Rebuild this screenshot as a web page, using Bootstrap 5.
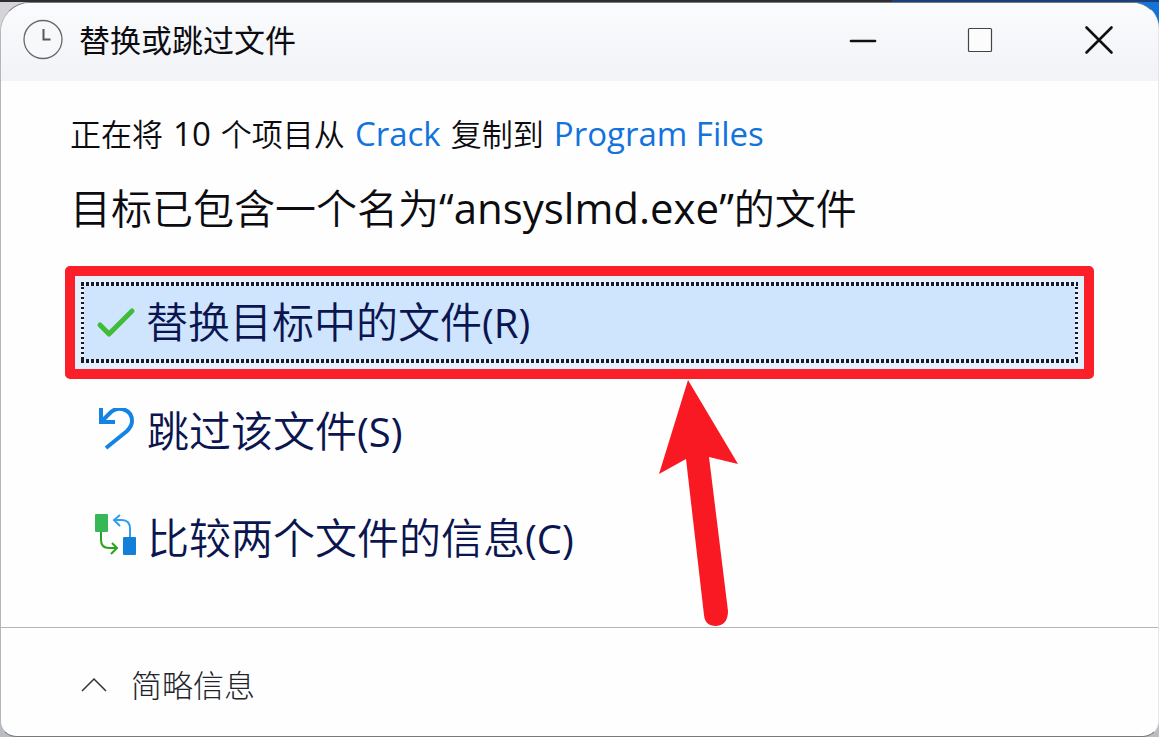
<!DOCTYPE html>
<html lang="zh-CN">
<head>
<meta charset="utf-8">
<meta name="viewport" content="width=device-width, initial-scale=1">
<title>替换或跳过文件</title>
<link href="https://cdn.jsdelivr.net/npm/bootstrap@5.3.0/dist/css/bootstrap.min.css" rel="stylesheet">
<style>
  body {
    font-family: "Open Sans", "Noto Sans CJK SC", sans-serif;
    color: #0c0c10;
    background: linear-gradient(90deg, #2f2d33 0 77%, #1b3f78 77%) top / 100% 2px no-repeat, linear-gradient(90deg, #d5d5d8 0 77%, #1473d8 77%) top / 100% 60px no-repeat, #b9bcc0;
  }
  .desktop { padding-top: 2px; }
  .dialog-window {
    border: 1px solid #b4b6b9;
    border-color: #77797d #e4e6e9 #77797d #b4b6b9;
    border-radius: 30px 26px 16px 16px;
    background: #fefefe;
  }
  .title-bar { height: 78px; background: linear-gradient(#fafbfd, #f1f3f6); padding: 0 0 4px 22px; }
  .title-text { font-size: 31px; line-height: 40px; font-weight: 400; }
  .caption-btn { width: 118px; height: 72px; border: 0; background: transparent; padding: 0; }
  .dialog-main { padding: 31px 64px 0; }
  .inset-text { padding-left: 5px; }
  .copy-line { font-size: 31px; line-height: 44px; font-weight: 350; }
  .copy-line a { color: #1273dc; }
  .latin { font-size: 33px; font-weight: 400; padding: 0 2px; }
  .headline { font-size: 41px; line-height: 56px; font-weight: 350; margin-top: 24px; }
  .headline-latin { font-size: 42px; font-weight: 400; }
  .key-hint { font-size: 40px; font-weight: 400; }
  .option-btn {
    border: 0; background: transparent; color: #0b1550; text-align: left;
    font-size: 42px; line-height: 60px; font-weight: 350; padding: 0 30px;
  }
  .option-btn svg { flex: none; width: 44px; height: 48px; }
  .option-area { margin-top: 30px; }
  .option-gap { gap: 46px; margin-top: 22px; }
  .marked { border: 10px solid #fb1f2a; border-radius: 5px; background: #e3effd; padding: 6px; }
  .marked .option-btn {
    width: 100%; height: 81px; padding: 0 13px;
    background:
      repeating-linear-gradient(90deg, #17192b 0 3px, #e9f1fb 3px 5px) top / 100% 4px no-repeat,
      repeating-linear-gradient(90deg, #17192b 0 3px, #e9f1fb 3px 5px) bottom / 100% 4px no-repeat,
      repeating-linear-gradient(#17192b 0 2px, #e9f1fb 2px 5px) left / 3px 100% no-repeat,
      repeating-linear-gradient(#17192b 0 2px, #e9f1fb 2px 5px) right / 3px 100% no-repeat,
      #cfe4fd;
  }
  .pointer-arrow { position: absolute; left: 58%; top: 100%; width: 82px; height: 257px; overflow: visible; pointer-events: none; }
  .dialog-foot { border-top: 1px solid #b4b5b8; height: 109px; padding: 6px 80px 0; }
  .fold-btn { border: 0; background: transparent; padding: 0; font-size: 31px; line-height: 44px; font-weight: 300; gap: 24px; color: #20242c; }
</style>
</head>
<body>
<div class="desktop min-vh-100 d-flex flex-column">
<div class="dialog-window flex-grow-1 d-flex flex-column overflow-hidden" role="dialog" aria-labelledby="dialogTitle">
  <header class="title-bar d-flex align-items-center">
    <svg width="40" height="42" viewBox="0 0 40 42" fill="none" aria-hidden="true"><circle cx="20" cy="20.500" r="19" fill="#f7f8f9" stroke="#65676b" stroke-width="1.300"/><path d="M20.500 10v10.500h7" stroke="#55575b" stroke-width="2"/></svg>
    <h1 id="dialogTitle" class="title-text mb-0 ms-3">替换或跳过文件</h1>
    <div class="ms-auto d-flex">
      <button type="button" class="caption-btn" aria-label="最小化"><svg width="30" height="30"><path d="M3 16h24" stroke="#111" stroke-width="2.600" stroke-linecap="round"/></svg></button>
      <button type="button" class="caption-btn" aria-label="最大化"><svg width="30" height="30"><rect x="2.500" y="3.500" width="23" height="23" rx="1" fill="#fcfcfd" stroke="#444" stroke-width="1.200"/></svg></button>
      <button type="button" class="caption-btn" aria-label="关闭"><svg width="30" height="30"><path d="M2.500 2.500 27.500 27.500M27.500 2.500 2.500 27.500" stroke="#111" stroke-width="2.600" stroke-linecap="round"/></svg></button>
    </div>
  </header>

  <main class="dialog-main flex-grow-1">
    <p class="copy-line inset-text mb-0">正在将 <span class="latin">10</span> 个项目从 <a href="#" class="latin text-decoration-none">Crack</a> 复制到 <a href="#" class="latin text-decoration-none">Program Files</a></p>
    <h2 class="headline inset-text mb-0">目标已包含一个名为<span class="headline-latin">“ansyslmd.exe”</span>的文件</h2>

    <div class="option-area">
      <div class="marked position-relative">
        <button type="button" class="option-btn d-flex align-items-center gap-2">
          <svg viewBox="0 0 44 48" fill="none" aria-hidden="true"><path d="M6 26 15 35 38 12" stroke="#3fbd38" stroke-width="5" stroke-linecap="round" stroke-linejoin="round"/></svg>
          <span>替换目标中的文件<span class="key-hint">(R)</span></span>
        </button>
        <svg class="pointer-arrow" viewBox="3 -9 82 257" aria-hidden="true"><path d="M31 2 81 86 52 79 71 233Q71 247 59 248 48 248 47 237L29 81 2 96Z" fill="#f91922"/></svg>
      </div>
      <div class="option-gap d-flex flex-column align-items-start">
      <button type="button" class="option-btn d-flex align-items-center gap-2">
        <svg viewBox="0 0 44 48" fill="none" stroke="#1583e6" stroke-width="4" aria-hidden="true"><path d="M6 0V14H20M7 13 15 5C23-3 37 1 37 13Q37 18 32 23L11 40"/></svg>
        <span>跳过该文件<span class="key-hint">(S)</span></span>
      </button>
      <button type="button" class="option-btn d-flex align-items-center gap-2">
        <svg viewBox="0 2 44 48" overflow="visible" fill="none" stroke-width="2" aria-hidden="true"><rect x="0" y="1" width="13" height="18" rx="1" fill="#37b856"/><rect x="28" y="24" width="13" height="18" rx="1" fill="#1280d8"/><path d="M6 19V27Q6 35 14 35H22M17 30 22 35 16 41" stroke="#27a51c"/><path d="M35 24V16Q35 7 27 7H19M25 2 19 7 25 13" stroke="#2f9df0"/></svg>
        <span>比较两个文件的信息<span class="key-hint">(C)</span></span>
      </button>
      </div>
    </div>
  </main>

  <footer class="dialog-foot d-flex align-items-center">
    <button type="button" class="fold-btn d-flex align-items-center"><svg width="26" height="26" fill="none" aria-hidden="true"><path d="M1 19 13 7 25 19" stroke="#333" stroke-width="1.500"/></svg><span>简略信息</span></button>
  </footer>
</div>
</div>
<script src="https://cdn.jsdelivr.net/npm/bootstrap@5.3.0/dist/js/bootstrap.bundle.min.js"></script>
</body>
</html>
